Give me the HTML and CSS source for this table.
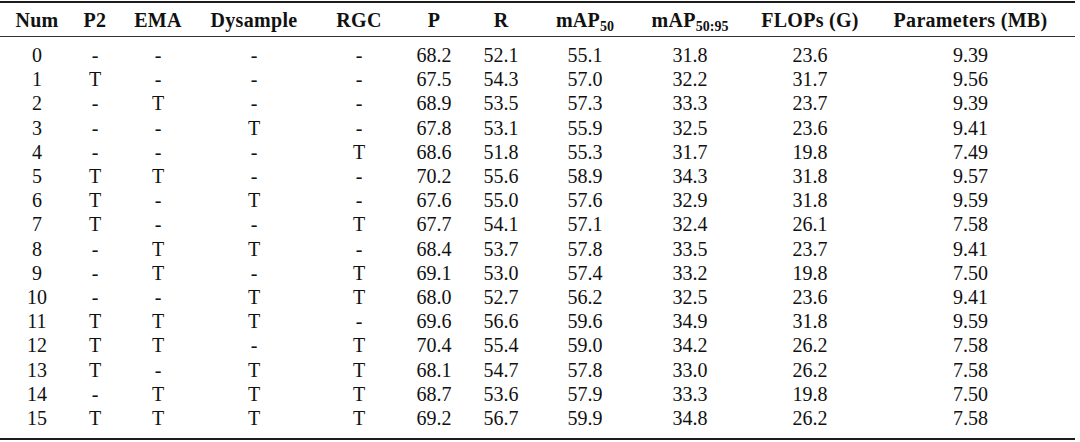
FILE: index.html
```html
<!DOCTYPE html>
<html lang="en">
<head>
<meta charset="utf-8">
<title>Ablation results</title>
<link rel="stylesheet" href="styles.css">
</head>
<body>
<table class="results">
  <colgroup>
    <col class="c-num"><col class="c-p2"><col class="c-ema"><col class="c-dys"><col class="c-rgc">
    <col class="c-p"><col class="c-r"><col class="c-map50"><col class="c-map5095"><col class="c-flops"><col class="c-params">
  </colgroup>
  <thead>
    <tr>
      <th>Num</th><th>P2</th><th>EMA</th><th>Dysample</th><th>RGC</th>
      <th>P</th><th>R</th><th>mAP<sub>50</sub></th><th>mAP<sub>50:95</sub></th><th>FLOPs (G)</th><th>Parameters (MB)</th>
    </tr>
  </thead>
  <tbody>
    <tr class="first"><td>0</td><td>-</td><td>-</td><td>-</td><td>-</td><td>68.2</td><td>52.1</td><td>55.1</td><td>31.8</td><td>23.6</td><td>9.39</td></tr>
    <tr><td>1</td><td>T</td><td>-</td><td>-</td><td>-</td><td>67.5</td><td>54.3</td><td>57.0</td><td>32.2</td><td>31.7</td><td>9.56</td></tr>
    <tr><td>2</td><td>-</td><td>T</td><td>-</td><td>-</td><td>68.9</td><td>53.5</td><td>57.3</td><td>33.3</td><td>23.7</td><td>9.39</td></tr>
    <tr><td>3</td><td>-</td><td>-</td><td>T</td><td>-</td><td>67.8</td><td>53.1</td><td>55.9</td><td>32.5</td><td>23.6</td><td>9.41</td></tr>
    <tr><td>4</td><td>-</td><td>-</td><td>-</td><td>T</td><td>68.6</td><td>51.8</td><td>55.3</td><td>31.7</td><td>19.8</td><td>7.49</td></tr>
    <tr><td>5</td><td>T</td><td>T</td><td>-</td><td>-</td><td>70.2</td><td>55.6</td><td>58.9</td><td>34.3</td><td>31.8</td><td>9.57</td></tr>
    <tr><td>6</td><td>T</td><td>-</td><td>T</td><td>-</td><td>67.6</td><td>55.0</td><td>57.6</td><td>32.9</td><td>31.8</td><td>9.59</td></tr>
    <tr><td>7</td><td>T</td><td>-</td><td>-</td><td>T</td><td>67.7</td><td>54.1</td><td>57.1</td><td>32.4</td><td>26.1</td><td>7.58</td></tr>
    <tr><td>8</td><td>-</td><td>T</td><td>T</td><td>-</td><td>68.4</td><td>53.7</td><td>57.8</td><td>33.5</td><td>23.7</td><td>9.41</td></tr>
    <tr><td>9</td><td>-</td><td>T</td><td>-</td><td>T</td><td>69.1</td><td>53.0</td><td>57.4</td><td>33.2</td><td>19.8</td><td>7.50</td></tr>
    <tr><td>10</td><td>-</td><td>-</td><td>T</td><td>T</td><td>68.0</td><td>52.7</td><td>56.2</td><td>32.5</td><td>23.6</td><td>9.41</td></tr>
    <tr><td>11</td><td>T</td><td>T</td><td>T</td><td>-</td><td>69.6</td><td>56.6</td><td>59.6</td><td>34.9</td><td>31.8</td><td>9.59</td></tr>
    <tr><td>12</td><td>T</td><td>T</td><td>-</td><td>T</td><td>70.4</td><td>55.4</td><td>59.0</td><td>34.2</td><td>26.2</td><td>7.58</td></tr>
    <tr><td>13</td><td>T</td><td>-</td><td>T</td><td>T</td><td>68.1</td><td>54.7</td><td>57.8</td><td>33.0</td><td>26.2</td><td>7.58</td></tr>
    <tr><td>14</td><td>-</td><td>T</td><td>T</td><td>T</td><td>68.7</td><td>53.6</td><td>57.9</td><td>33.3</td><td>19.8</td><td>7.50</td></tr>
    <tr class="last"><td>15</td><td>T</td><td>T</td><td>T</td><td>T</td><td>69.2</td><td>56.7</td><td>59.9</td><td>34.8</td><td>26.2</td><td>7.58</td></tr>
  </tbody>
</table>
</body>
</html>
```

FILE: styles.css
```css
html, body {
  margin: 0;
  padding: 0;
  background: #ffffff;
}

body {
  font-family: "Liberation Serif", "Times New Roman", serif;
  font-size: 20px;
  color: #111111;
}

.results {
  margin-top: 1px;
  width: 1075px;
  table-layout: fixed;
  border-collapse: separate;
  border-spacing: 0;
}

.c-num { width: 74px; }
.c-p2 { width: 42px; }
.c-ema { width: 84px; }
.c-dys { width: 108px; }
.c-rgc { width: 102px; }
.c-p { width: 48px; }
.c-r { width: 86px; }
.c-map50 { width: 82px; }
.c-map5095 { width: 128px; }
.c-flops { width: 112px; }
.c-params { width: 209px; }

.results th,
.results td {
  text-align: center;
  white-space: nowrap;
  padding: 0;
}

.results th {
  font-weight: bold;
  letter-spacing: 0.3px;
  line-height: 24px;
  padding-top: 5px;
  padding-bottom: 4px;
  border-top: 2px solid #1c1c1c;
  border-bottom: 1px solid #333333;
}

.results th sub {
  font-size: 14px;
  letter-spacing: 0;
  line-height: 0;
  vertical-align: -4px;
}

.results td {
  line-height: 24.2px;
}

.results tr.first td {
  padding-top: 6px;
}

.results tr.last td {
  padding-bottom: 8px;
  border-bottom: 2px solid #1c1c1c;
}
```
